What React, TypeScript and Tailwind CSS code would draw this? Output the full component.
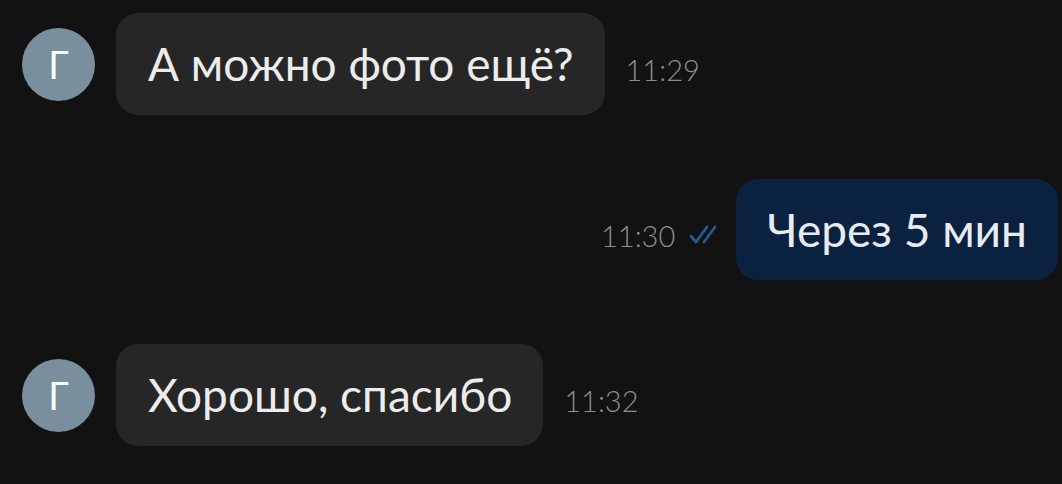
import React from 'react';

type Msg = { id: number; out: boolean; text: string; time: string; initial?: string };

const MESSAGES: Msg[] = [
  { id: 1, out: false, text: 'А можно фото ещё?', time: '11:29', initial: 'Г' },
  { id: 2, out: true, text: 'Через 5 мин', time: '11:30' },
  { id: 3, out: false, text: 'Хорошо, спасибо', time: '11:32', initial: 'Г' },
];

const DoubleCheck = () => (
  <svg width="32" height="22" viewBox="0 0 32 22" fill="none" stroke="#245a8e" strokeWidth="2.8" strokeLinecap="round" strokeLinejoin="round">
    <path d="M2 13l5 6 11-15" />
    <path d="M15 19l11-15" />
  </svg>
);

export default function App() {
  return (
    <div className="w-[1062px] h-[484px] bg-[#121212] font-['Lato','Noto_Sans',sans-serif] overflow-hidden pt-[13px] flex flex-col gap-[64px]">
      {MESSAGES.map((m) =>
        m.out ? (
          <div key={m.id} className="flex items-baseline justify-end pr-[4px]">
            <span className="text-[29px] font-light text-[#8e8e8e] mr-[14px]">{m.time}</span>
            <span className="mr-[15px] self-center mt-[8px]"><DoubleCheck /></span>
            <div className="bg-[#0a2140] rounded-[22px] h-[101px] px-[31px] flex items-center text-[46px] text-[#e8ecf2] leading-none">
              {m.text}
            </div>
          </div>
        ) : (
          <div key={m.id} className="flex items-center pl-[22px]">
            <div className="w-[73px] h-[73px] rounded-full bg-[#7a8f9d] flex items-center justify-center text-white text-[38px] mr-[21px]">
              {m.initial}
            </div>
            <div className="flex items-baseline">
              <div className="bg-[#262626] rounded-[22px] h-[102px] pl-[32px] pr-[31px] flex items-center text-[46px] text-[#ececec] leading-none">
                {m.text}
              </div>
              <span className="text-[29px] font-light text-[#8e8e8e] ml-[21px]">{m.time}</span>
            </div>
          </div>
        )
      )}
    </div>
  );
}
